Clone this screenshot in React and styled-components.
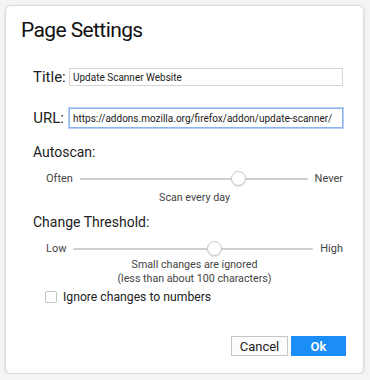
import React, { useState } from 'react'
import styled, { createGlobalStyle } from 'styled-components'

const Global = createGlobalStyle`
  html, body { margin: 0; padding: 0; background: #f4f4f4; }
  body { font-family: Roboto, "Noto Sans", sans-serif; color: #222; }
`

const Dialog = styled.div`
  box-sizing: border-box;
  width: 359px;
  height: 369px;
  margin: 5px 0 0 5px;
  background: #fff;
  border: 1px solid #dcdcdc;
  border-radius: 6px;
  box-shadow: 0 1px 3px rgba(0,0,0,0.12);
  padding: 10px 17px 0 15px;
  display: flex;
  flex-direction: column;
`

const Heading = styled.h1`
  margin: 0;
  font-size: 21px;
  letter-spacing: -0.6px;
  font-weight: 400;
  line-height: 28px;
  color: #111;
`

const Form = styled.div`
  padding: 0 3px 0 12px;
  display: flex;
  flex-direction: column;
`

const Field = styled.label`
  display: flex;
  align-items: center;
  gap: 5px;
  margin-top: ${p => p.$top}px;
`

const FieldLabel = styled.span`
  width: 31px;
  text-align: right;
  font-size: 15px;
  color: #222;
  white-space: nowrap;
`

const TextInput = styled.input`
  flex: 1;
  box-sizing: border-box;
  height: ${p => p.$focus ? 20 : 18}px;
  border: 1px solid ${p => p.$focus ? '#8ab4f0' : '#d6d6d6'};
  box-shadow: ${p => p.$focus ? '0 0 0 1px #b7d0f5' : 'none'};
  padding: 0 3px;
  font-family: inherit;
  font-size: 10px;
  color: #222;
  outline: none;
  border-radius: 0;
`

const Section = styled.div`
  font-size: 14px;
  color: #222;
  margin-top: ${p => p.$top}px;
  line-height: 18px;
`

const SliderRow = styled.div`
  display: flex;
  align-items: center;
  gap: 7px;
  padding-left: 13px;
  margin-top: ${p => p.$top}px;
  font-size: 11px;
  color: #444;
`

const Track = styled.div`
  position: relative;
  flex: 1;
  height: 2px;
  background: #cfcfcf;
  border-radius: 1px;
`

const Thumb = styled.div`
  position: absolute;
  top: -7px;
  width: 15px;
  height: 15px;
  margin-left: -8px;
  border-radius: 50%;
  background: #fff;
  border: 1px solid #c8c8c8;
  box-sizing: border-box;
  box-shadow: 0 1px 1px rgba(0,0,0,0.12);
`

const Note = styled.div`
  text-align: center;
  font-size: 10.7px;
  color: #444;
  line-height: 14px;
  padding-left: 13px;
  margin-top: ${p => p.$top}px;
`

const Check = styled.label`
  display: flex;
  align-items: center;
  gap: 6px;
  padding-left: 12px;
  margin-top: 4px;
  font-size: 12.2px;
  color: #222;
`

const Box = styled.span`
  width: 10px;
  height: 10px;
  border: 1px solid #c4c4c4;
  border-radius: 2px;
  background: #fff;
`

const Actions = styled.div`
  display: flex;
  justify-content: flex-end;
  gap: 3px;
  margin-top: auto;
  margin-bottom: 17px;
`

const Button = styled.button`
  width: ${p => p.$w}px;
  height: 20px;
  box-sizing: border-box;
  font-family: inherit;
  font-size: 13px;
  border-radius: 0;
  padding: 0;
  border: 1px solid ${p => p.$primary ? '#1a8df6' : '#c6c6c6'};
  background: ${p => p.$primary ? '#1a8df6' : '#fbfbfb'};
  color: ${p => p.$primary ? '#fff' : '#222'};
  font-weight: ${p => p.$primary ? 600 : 400};
`

function Slider({ left, right, value, top }) {
  return (
    <SliderRow $top={top}>
      <span>{left}</span>
      <Track>
        <Thumb style={{ left: `${value}%` }} />
      </Track>
      <span>{right}</span>
    </SliderRow>
  )
}

export default function App() {
  const [title, setTitle] = useState('Update Scanner Website')
  const [url, setUrl] = useState('https://addons.mozilla.org/firefox/addon/update-scanner/')

  return (
    <>
      <Global />
      <Dialog>
        <Heading>Page Settings</Heading>
        <Form>
          <Field $top={24}>
            <FieldLabel>Title:</FieldLabel>
            <TextInput value={title} onChange={e => setTitle(e.target.value)} />
          </Field>
          <Field $top={22}>
            <FieldLabel>URL:</FieldLabel>
            <TextInput $focus value={url} onChange={e => setUrl(e.target.value)} />
          </Field>
          <Section $top={15}>Autoscan:</Section>
          <Slider left="Often" right="Never" value={70} top={11} />
          <Note $top={6}>Scan every day</Note>
          <Section $top={8}>Change Threshold:</Section>
          <Slider left="Low" right="High" value={59} top={11} />
          <Note $top={3}>Small changes are ignored<br />(less than about 100 characters)</Note>
          <Check>
            <Box />
            Ignore changes to numbers
          </Check>
        </Form>
        <Actions>
          <Button $w={57}>Cancel</Button>
          <Button $w={55} $primary>Ok</Button>
        </Actions>
      </Dialog>
    </>
  )
}
